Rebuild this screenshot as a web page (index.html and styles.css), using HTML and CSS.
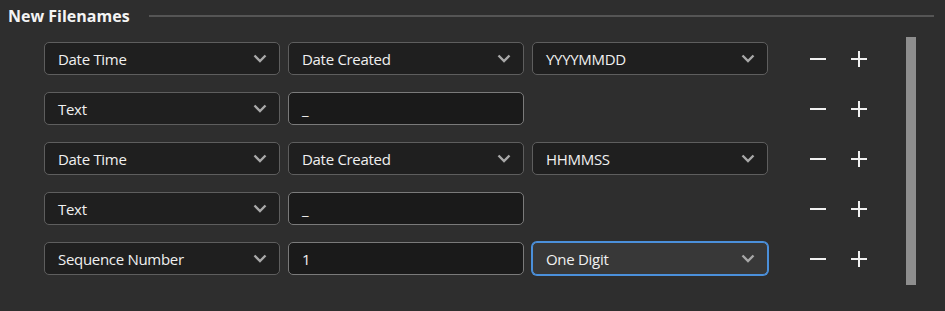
FILE: index.html
```html
<!DOCTYPE html>
<html lang="en">
  <head>
    <meta charset="UTF-8" />
    <title>New Filenames</title>
    <link rel="stylesheet" href="styles.css">
  </head>
  <body>
    <div class="section-head">
      <h2>New Filenames</h2>
      <span class="rule"></span>
    </div>

    <div class="panel">
      <div class="rows">
        <div class="row">
          <div class="field select"><span>Date Time</span><svg class="chev" viewBox="0 0 14 9"><path d="M1.5 1.5 7 7l5.5-5.5" /></svg></div>
          <div class="field select"><span>Date Created</span><svg class="chev" viewBox="0 0 14 9"><path d="M1.5 1.5 7 7l5.5-5.5" /></svg></div>
          <div class="field select"><span>YYYYMMDD</span><svg class="chev" viewBox="0 0 14 9"><path d="M1.5 1.5 7 7l5.5-5.5" /></svg></div>
          <div class="controls">
            <svg class="btn" viewBox="0 0 16 16"><path d="M0 8h16" /></svg>
            <svg class="btn" viewBox="0 0 16 16"><path d="M0 8h16M8 0v16" /></svg>
          </div>
        </div>

        <div class="row">
          <div class="field select"><span>Text</span><svg class="chev" viewBox="0 0 14 9"><path d="M1.5 1.5 7 7l5.5-5.5" /></svg></div>
          <div class="field input"><span>_</span></div>
          <div class="field empty"></div>
          <div class="controls">
            <svg class="btn" viewBox="0 0 16 16"><path d="M0 8h16" /></svg>
            <svg class="btn" viewBox="0 0 16 16"><path d="M0 8h16M8 0v16" /></svg>
          </div>
        </div>

        <div class="row">
          <div class="field select"><span>Date Time</span><svg class="chev" viewBox="0 0 14 9"><path d="M1.5 1.5 7 7l5.5-5.5" /></svg></div>
          <div class="field select"><span>Date Created</span><svg class="chev" viewBox="0 0 14 9"><path d="M1.5 1.5 7 7l5.5-5.5" /></svg></div>
          <div class="field select"><span>HHMMSS</span><svg class="chev" viewBox="0 0 14 9"><path d="M1.5 1.5 7 7l5.5-5.5" /></svg></div>
          <div class="controls">
            <svg class="btn" viewBox="0 0 16 16"><path d="M0 8h16" /></svg>
            <svg class="btn" viewBox="0 0 16 16"><path d="M0 8h16M8 0v16" /></svg>
          </div>
        </div>

        <div class="row">
          <div class="field select"><span>Text</span><svg class="chev" viewBox="0 0 14 9"><path d="M1.5 1.5 7 7l5.5-5.5" /></svg></div>
          <div class="field input"><span>_</span></div>
          <div class="field empty"></div>
          <div class="controls">
            <svg class="btn" viewBox="0 0 16 16"><path d="M0 8h16" /></svg>
            <svg class="btn" viewBox="0 0 16 16"><path d="M0 8h16M8 0v16" /></svg>
          </div>
        </div>

        <div class="row">
          <div class="field select"><span>Sequence Number</span><svg class="chev" viewBox="0 0 14 9"><path d="M1.5 1.5 7 7l5.5-5.5" /></svg></div>
          <div class="field input"><span>1</span></div>
          <div class="field select focused"><span>One Digit</span><svg class="chev" viewBox="0 0 14 9"><path d="M1.5 1.5 7 7l5.5-5.5" /></svg></div>
          <div class="controls">
            <svg class="btn" viewBox="0 0 16 16"><path d="M0 8h16" /></svg>
            <svg class="btn" viewBox="0 0 16 16"><path d="M0 8h16M8 0v16" /></svg>
          </div>
        </div>
      </div>

      <div class="scrollbar"></div>
    </div>
  </body>
</html>
```

FILE: styles.css
```css
body {
  margin: 0;
  background-color: #2e2e2e;
  color: #f0f0f0;
  font-family: "Open Sans", "Noto Sans", sans-serif;
  width: 945px;
  height: 311px;
  overflow: hidden;
}

.section-head {
  display: flex;
  align-items: center;
  height: 37px;
  padding: 0 11px 6px 8px;
  box-sizing: border-box;
}

.section-head h2 {
  margin: 0;
  font-size: 16px;
  font-weight: 700;
  color: #f4f4f4;
  white-space: nowrap;
}

.rule {
  flex: 1;
  height: 2px;
  margin-left: 19px;
  background-color: #555555;
}

.panel {
  display: flex;
  justify-content: space-between;
  padding: 0 29px 0 44px;
}

.rows {
  display: flex;
  flex-direction: column;
  gap: 17px;
  padding-top: 5px;
}

.row {
  display: flex;
  align-items: center;
  gap: 8px;
  height: 33px;
}

.field {
  box-sizing: border-box;
  width: 236px;
  height: 33px;
  display: flex;
  align-items: center;
  justify-content: space-between;
  padding: 0 12px 0 13px;
  font-size: 15px;
  letter-spacing: -0.3px;
  border-radius: 5px;
}

.select {
  background-color: #1f1f1f;
  border: 1px solid #5e5e5e;
}

.input {
  background-color: #1a1a1a;
  border: 1px solid #7a7a7a;
}

.empty {
  border: none;
}

.select.focused {
  background-color: #383838;
  border: 1px solid #4b90db;
  box-shadow: 0 0 0 1px #4b90db;
}

.chev {
  width: 14px;
  height: 9px;
  fill: none;
  stroke: #a8a8a8;
  stroke-width: 2.4;
}

.controls {
  display: flex;
  align-items: center;
  gap: 25px;
  margin-left: 34px;
}

.btn {
  width: 16px;
  height: 16px;
  fill: none;
  stroke: #f2f2f2;
  stroke-width: 2;
}

.scrollbar {
  width: 10px;
  height: 248px;
  background-color: #8e8e8e;
}
```
